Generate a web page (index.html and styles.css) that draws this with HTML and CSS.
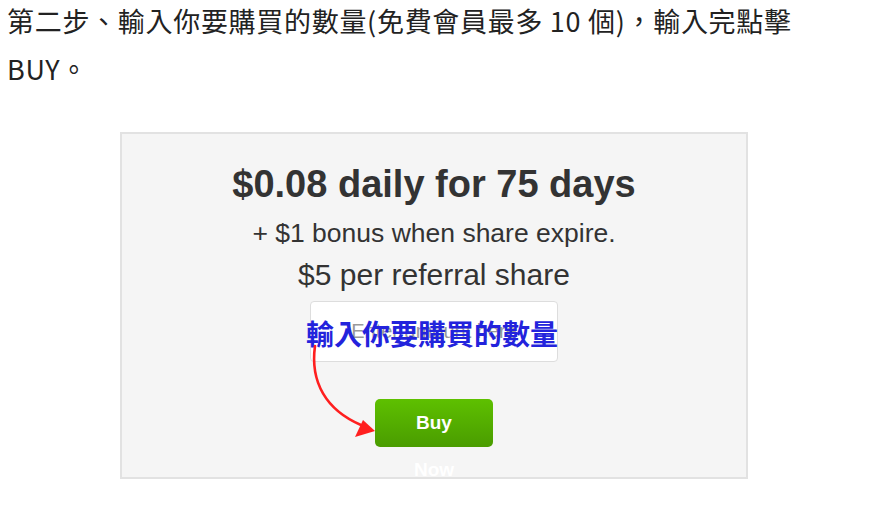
FILE: index.html
```html
<!DOCTYPE html>
<html lang="zh-Hant">
<head>
<meta charset="utf-8">
<title>Step 2</title>
<link rel="stylesheet" href="styles.css">
</head>
<body>
<p class="intro">第二步、輸入你要購買的數量(免費會員最多 10 個)，輸入完點擊<br>BUY。</p>
<div class="card">
  <h2 class="price">$0.08 daily for 75 days</h2>
  <p class="bonus">+ $1 bonus when share expire.</p>
  <p class="referral">$5 per referral share</p>
  <div class="field">
    <input class="qty" type="text" placeholder="Enter amount here">
    <span class="note">輸入你要購買的數量</span>
  </div>
  <div class="buy">Buy<br>Now</div>
  <svg class="arrow" viewBox="120 132 628 347" width="628" height="347" aria-hidden="true">
    <path d="M315 346 C 310 382, 326 410, 361 425" fill="none" stroke="#ff1f1f" stroke-width="2.6" stroke-linecap="round"/>
    <polygon points="375,431 363,420 355,437" fill="#ff1f1f"/>
  </svg>
</div>
</body>
</html>
```
FILE: styles.css
```css
html, body {
  margin: 0;
  padding: 0;
  background: #ffffff;
}

body {
  width: 872px;
  height: 524px;
  overflow: hidden;
}

.intro {
  margin: -3px 0 0;
  padding: 0 0 0 7px;
  font-family: "Noto Sans CJK TC", "Noto Sans", sans-serif;
  font-size: 27px;
  line-height: 48px;
  letter-spacing: 0.7px;
  color: #222222;
  white-space: nowrap;
}

.card {
  position: relative;
  box-sizing: border-box;
  margin: 39px 0 0 120px;
  width: 628px;
  height: 347px;
  border: 2px solid #e2e2e2;
  background: #f5f5f5;
  padding-top: 28px;
  display: flex;
  flex-direction: column;
  align-items: center;
  font-family: "Liberation Sans", Arial, sans-serif;
  color: #333333;
}

.price {
  margin: 0;
  font-size: 38px;
  font-weight: bold;
  line-height: 44px;
}

.bonus {
  margin: 12px 0 0;
  font-size: 26.5px;
  line-height: 30px;
}

.referral {
  margin: 10px 0 0;
  font-size: 30px;
  line-height: 34px;
}

.field {
  position: relative;
  margin-top: 9px;
  width: 248px;
  height: 61px;
}

.qty {
  box-sizing: border-box;
  width: 248px;
  height: 61px;
  border: 1px solid #dddddd;
  border-radius: 4px;
  background: #ffffff;
  font-family: "Liberation Sans", Arial, sans-serif;
  font-size: 20px;
  text-align: center;
  color: #555555;
  padding: 0 10px;
  outline: none;
}

.qty::placeholder {
  color: #9a9a9a;
}

.note {
  position: absolute;
  left: -6px;
  top: 15px;
  width: 256px;
  text-align: center;
  font-family: "Noto Sans CJK TC", sans-serif;
  font-size: 28px;
  line-height: 34px;
  font-weight: bold;
  color: #2323dc;
  white-space: nowrap;
}

.buy {
  margin-top: 37px;
  width: 118px;
  height: 48px;
  border-radius: 5px;
  background: linear-gradient(#5ec000, #4a9c00);
  color: #ffffff;
  font-family: "Liberation Sans", Arial, sans-serif;
  font-size: 19px;
  font-weight: bold;
  line-height: 47px;
  text-align: center;
}

.arrow {
  position: absolute;
  left: -2px;
  top: -2px;
  pointer-events: none;
}
```
